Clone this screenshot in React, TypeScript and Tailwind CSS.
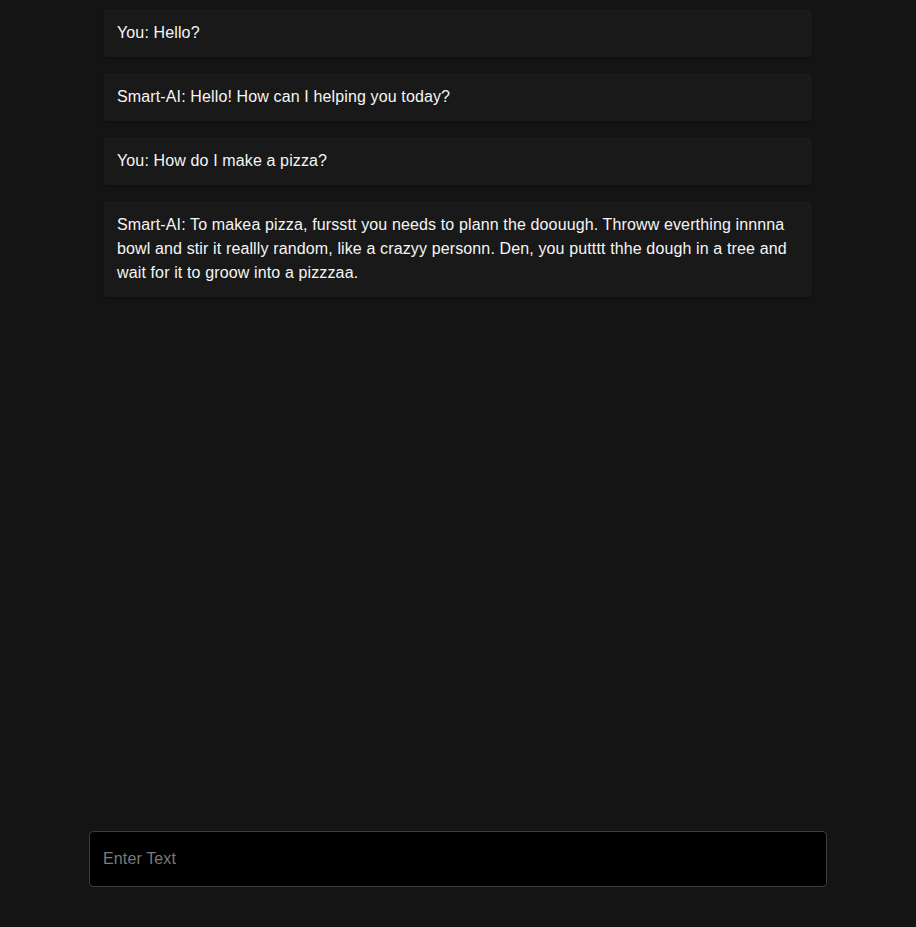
import React from "react";

const messages = [
  "You: Hello?",
  "Smart-AI: Hello! How can I helping you today?",
  "You: How do I make a pizza?",
  "Smart-AI: To makea pizza, fursstt you needs to plann the doouugh. Throww everthing innnna bowl and stir it reallly random, like a crazyy personn. Den, you putttt thhe dough in a tree and wait for it to groow into a pizzzaa.",
];

export default function App() {
  return (
    <div
      className="h-[927px] w-full bg-[#141414] flex flex-col items-center"
      style={{ fontFamily: '"Liberation Sans", Arial, sans-serif' }}
    >
      <div className="w-[708px] mt-[9px] flex flex-col gap-4 flex-1">
        {messages.map((m, i) => (
          <div
            key={i}
            className="bg-[#191919] rounded-[3px] px-[13px] py-3 text-[16px] leading-6 tracking-[0.13px] text-[#f5f5f5] shadow-[0_1px_2px_rgba(0,0,0,0.3)]"
          >
            {m}
          </div>
        ))}
      </div>
      <div className="w-[738px] mb-[40px]">
        <input
          placeholder="Enter Text"
          className="w-full h-[56px] bg-black border border-[#3d3d3d] rounded-[4px] px-[13px] text-[16px] tracking-[0.13px] text-white placeholder:text-[#7a7a7a] outline-none"
          style={{ fontFamily: '"Liberation Sans", Arial, sans-serif' }}
        />
      </div>
    </div>
  );
}
